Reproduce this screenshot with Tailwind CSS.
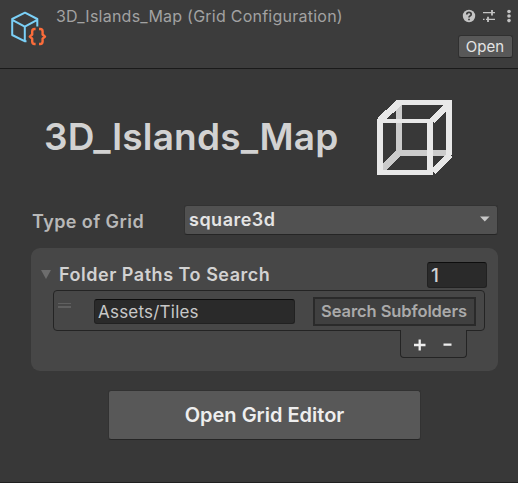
<!DOCTYPE html>
<html lang="en">
<head>
<meta charset="utf-8">
<title>3D_Islands_Map</title>
<script src="https://cdn.jsdelivr.net/npm/@tailwindcss/browser@4"></script>
</head>
<body class="bg-[#383838] font-['Inter',sans-serif] overflow-hidden">
<div class="w-[518px] h-[483px] flex flex-col border-b border-[#202020] whitespace-nowrap">
  <header class="h-[69px] shrink-0 bg-[#3c3c3c] border-b border-[#1a1a1a] flex">
    <svg class="ml-[8px] mt-[8px] shrink-0" width="40" height="40" viewBox="0 0 40 40" fill="none" stroke-linejoin="round">
      <path d="M18.5 33.2 L16.5 33.2 L4.2 27 V11 L17 4.7 L29.3 11 V18.5 M4.2 11.8 L16.8 18.6 L29.3 11.8 M16.8 18.6 V33" stroke="#7bd0f7" stroke-width="2"/>
      <path d="M27.6 21 H26.5 Q24.2 21 24.2 23.5 V26.5 L21.8 28.6 L24.2 30.7 V33.5 Q24.2 36 26.5 36 H27.6 M31 21 H32.2 Q34.6 21 34.6 23.5 V26.5 L37 28.6 L34.6 30.7 V33.5 Q34.6 36 32.2 36 H31" stroke="#fb6c3a" stroke-width="2.4"/>
    </svg>
    <h1 class="ml-[8px] mt-[6px] text-[16px] leading-5 text-[#a2a2a2] tracking-[0.24px]">3D_Islands_Map (Grid Configuration)</h1>
    <div class="ml-auto w-[60px] mr-0 flex flex-col">
      <svg class="mt-[8px]" width="60" height="16" viewBox="0 0 60 16" fill="none">
        <circle cx="11" cy="8" r="6.2" fill="#c4c4c4"/>
        <path d="M8.8 6.4 Q8.8 4.4 11 4.4 Q13.2 4.4 13.2 6.3 Q13.2 7.4 12 8 Q11 8.5 11 9.4 M11 10.7 V12.3" stroke="#3c3c3c" stroke-width="1.7"/>
        <path d="M25 4.7 H37 M25 11.4 H26.5 M28 11.4 H37" stroke="#c4c4c4" stroke-width="1.3"/>
        <path d="M34 2 V7.5 M30 8.7 V14" stroke="#c4c4c4" stroke-width="1.8"/>
        <g fill="#c4c4c4"><circle cx="51" cy="3.5" r="1.8"/><circle cx="51" cy="8" r="1.8"/><circle cx="51" cy="12.6" r="1.8"/></g>
      </svg>
      <button class="mt-[11px] w-[55px] h-[23px] rounded-[3px] border border-[#303030] border-b-[#242424] bg-[#585858] text-[#e4e4e4] text-[15px] leading-[20px] pr-[1px] tracking-[0px]">Open</button>
    </div>
  </header>
  <main class="pl-[31px] pr-[20px] flex flex-col">
    <div class="mt-[30px] h-[77px] flex">
      <h2 class="ml-[13px] w-[332px] mt-[15px] text-[37px] leading-[46px] font-semibold text-[#d2d2d2] tracking-[0.17px]">3D_Islands_Map</h2>
      <svg width="77" height="77" viewBox="0 0 77 77" fill="none" shape-rendering="crispEdges">
        <path d="M23 4 V56 M23 54 H74" stroke="#cbcbcb" stroke-width="6"/>
        <path d="M4 72 L24 53" stroke="#cbcbcb" stroke-width="7"/>
        <path d="M4 21.5 L22.5 4 M56 22 L74 4 M57 73 L74 56" stroke="#e8e8e8" stroke-width="7"/>
        <path d="M20 3.5 H76 M1 73 H57" stroke="#e8e8e8" stroke-width="5"/>
        <path d="M1 22 H57" stroke="#e8e8e8" stroke-width="4"/>
        <path d="M73 1 V56 M4 20 V75.5 M54 20 V75.5" stroke="#e8e8e8" stroke-width="6"/>
      </svg>
    </div>
    <div class="mt-[29px] h-[30px] flex">
      <label class="pl-[1px] w-[153px] pt-[5px] text-[18px] leading-6 font-semibold text-[#b8b8b8] tracking-[0.42px]">Type of Grid</label>
      <div class="w-[314px] h-[30px] rounded-[3px] border border-[#323232] border-b-[#252525] bg-[#515151] flex items-center justify-between pl-[4px] pr-[7px]">
        <span class="text-[18px] leading-6 font-semibold text-[#e4e4e4] tracking-[0.5px]">square3d</span>
        <svg class="-mt-[3px]" width="10" height="6" viewBox="0 0 10 6"><path d="M0 0.5 H9.6 L4.8 5.5Z" fill="#c8c8c8"/></svg>
      </div>
    </div>
    <section class="mt-[13px] w-[467px] h-[123px] rounded-[9px] bg-[#474747] flex flex-col pt-[14px]">
      <div class="h-[27px] flex">
        <svg class="ml-[10px] mt-[8px]" width="10" height="9" viewBox="0 0 10 9"><path d="M0 0 H10 L5 9Z" fill="#6d6d6d"/></svg>
        <span class="ml-[8px] pt-px text-[18px] leading-6 font-semibold text-[#d2d2d2] tracking-[0.52px]">Folder Paths To Search</span>
        <div class="ml-auto mr-[11px] w-[60px] h-[26px] rounded-[3px] border border-[#212121] border-t-[#0d0d0d] bg-[#2a2a2a] pl-[3px] text-[19px] leading-[26px] font-medium text-[#d2d2d2]">1</div>
      </div>
      <div class="mt-[1px] ml-[22px] w-[432px] h-[41px] rounded-[4px] border border-[#242424] flex">
        <div class="ml-[4px] mt-[12px] w-[13px] h-[5px] border-t border-b-2 border-[#606060]"></div>
        <div class="ml-[23px] mt-[8px] w-[201px] h-[25px] rounded-[3px] border border-[#212121] border-t-[#0d0d0d] bg-[#2a2a2a] pl-[3px] text-[17px] leading-[24px] text-[#c8c8c8] tracking-[0.22px]">Assets/Tiles</div>
        <button class="ml-[18px] mt-[6px] w-[163px] h-[29px] border-2 border-[#2a2a2a] bg-[#404040] text-[16.5px] leading-[25px] pr-[1px] font-semibold text-[#aaaaaa] tracking-[-0.09px]">Search Subfolders</button>
      </div>
      <div class="-mt-px ml-[369px] w-[67px] h-[28px] rounded-b-[4px] border border-t-0 border-[#242424] bg-[#474747] flex">
        <svg width="65" height="27" viewBox="0 0 65 27"><path d="M13 15 H24.5 M18.7 9.5 V20.5 M42.5 14.7 H50.5" stroke="#eeeeee" stroke-width="2.3"/></svg>
      </div>
    </section>
    <button class="mt-[19px] ml-[77px] w-[313px] h-[50px] rounded-[3px] border border-[#323232] border-b-[#252525] bg-[#585858] text-[20px] leading-[48px] font-semibold text-[#eeeeee]">Open Grid Editor</button>
  </main>
</div>
</body>
</html>
